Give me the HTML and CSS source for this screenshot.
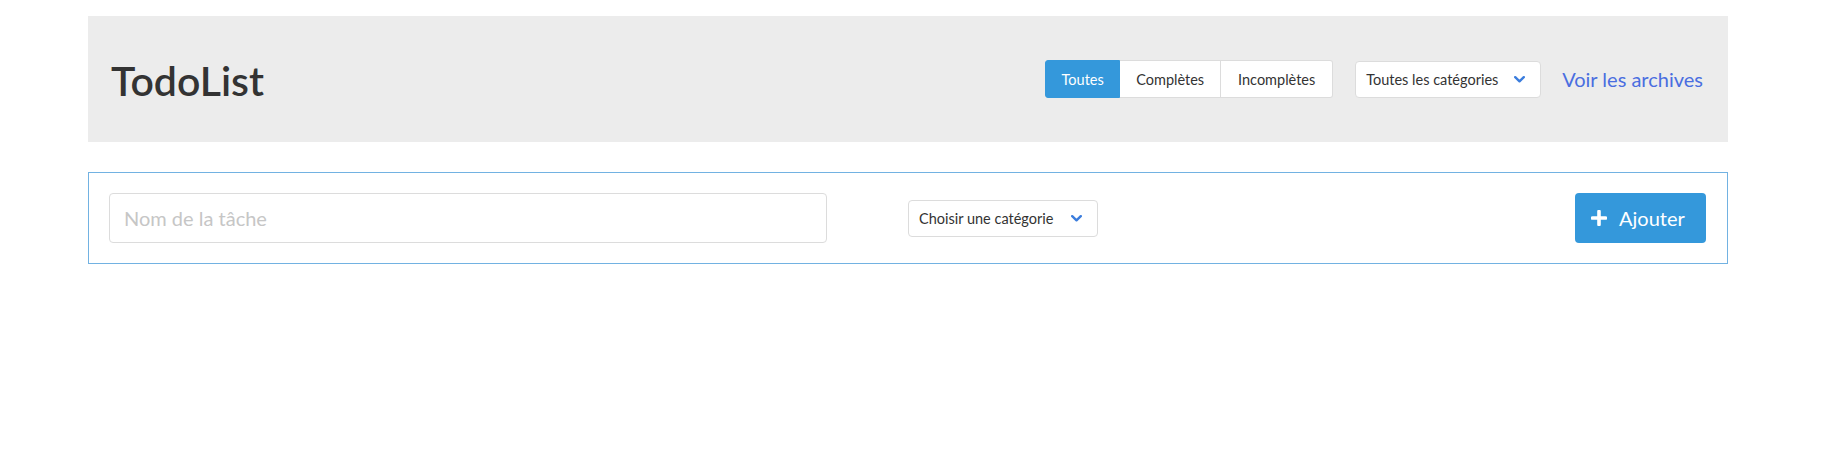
FILE: index.html
```html
<!DOCTYPE html>
<html lang="fr">
<head>
<meta charset="utf-8">
<title>TodoList</title>
<link rel="stylesheet" href="styles.css">
</head>
<body>
<div class="container">
  <header class="header">
    <h1 class="title">TodoList</h1>
    <div class="controls">
      <div class="btn-group">
        <button class="seg seg-active seg-1">Toutes</button>
        <button class="seg seg-2">Complètes</button>
        <button class="seg seg-3">Incomplètes</button>
      </div>
      <div class="select select-filter">
        <span>Toutes les catégories</span>
        <svg class="chev" width="11" height="7" viewBox="0 0 11 7"><path d="M1.2 1.2 L5.5 5.3 L9.8 1.2" fill="none" stroke="#3b7ddd" stroke-width="2.4" stroke-linecap="round" stroke-linejoin="round"/></svg>
      </div>
      <a class="archives" href="#">Voir les archives</a>
    </div>
  </header>

  <form class="add-form">
    <input class="task-input" type="text" placeholder="Nom de la tâche">
    <div class="select select-cat">
      <span>Choisir une catégorie</span>
      <svg class="chev" width="11" height="7" viewBox="0 0 11 7"><path d="M1.2 1.2 L5.5 5.3 L9.8 1.2" fill="none" stroke="#3b7ddd" stroke-width="2.4" stroke-linecap="round" stroke-linejoin="round"/></svg>
    </div>
    <button class="add-btn" type="button">
      <svg class="plus" width="16" height="16" viewBox="0 0 16 16"><path d="M8 1.5 V14.5 M1.5 8 H14.5" stroke="#fff" stroke-width="3.6" stroke-linecap="round"/></svg>
      <span>Ajouter</span>
    </button>
  </form>
</div>
</body>
</html>
```

FILE: styles.css
```css
* { box-sizing: border-box; }

body {
  margin: 0;
  background: #fff;
  font-family: Lato, "Open Sans", sans-serif;
  color: #333;
}

.container {
  width: 1640px;
  margin: 16px 0 0 88px;
}

.header {
  height: 126px;
  background: #ececec;
  display: flex;
  align-items: center;
  padding: 0 25px 0 23px;
}

.title {
  margin: 0;
  padding-top: 2px;
  font-size: 41px;
  line-height: 1;
  font-weight: 600;
  color: #333;
}

.controls {
  margin-left: auto;
  display: flex;
  align-items: center;
}

.btn-group {
  display: flex;
  height: 38px;
  margin-right: 1px;
}

.seg {
  font-family: Lato, sans-serif;
  font-size: 14.5px;
  color: #333;
  background: #fff;
  border: 1px solid #dcdcdc;
  border-left: none;
  padding: 0;
  height: 38px;
  cursor: pointer;
}

.seg-1 { width: 75px; border: 1px solid #3498db; border-radius: 3px 0 0 3px; }
.seg-2 { width: 101px; }
.seg-3 { width: 112px; border-radius: 0 3px 3px 0; }

.seg-active {
  background: #3498db;
  color: #fff;
}

.select {
  display: flex;
  align-items: center;
  justify-content: space-between;
  height: 37px;
  background: #fff;
  border: 1px solid #dcdcdc;
  border-radius: 4px;
  font-size: 14.5px;
  color: #333;
}

.select-filter {
  width: 186px;
  margin-left: 21px;
  padding: 0 15px 0 10px;
}

.archives {
  margin-left: 21px;
  font-size: 20px;
  color: #4a6ee0;
  text-decoration: none;
}

.add-form {
  margin-top: 30px;
  border: 1px solid #72b2e2;
  padding: 20px 21px 20px 20px;
  display: flex;
  align-items: center;
}

.task-input {
  width: 718px;
  height: 50px;
  border: 1px solid #dcdcdc;
  border-radius: 4px;
  padding: 0 14px;
  font-family: Lato, sans-serif;
  font-size: 20px;
  color: #333;
  outline: none;
}

.task-input::placeholder {
  color: #c6c6c6;
}

.select-cat {
  width: 190px;
  margin-left: 81px;
  padding: 0 15px 0 10px;
}

.add-btn {
  margin-left: auto;
  width: 131px;
  height: 50px;
  background: #3498db;
  border: none;
  border-radius: 4px;
  color: #fff;
  font-family: Lato, sans-serif;
  font-size: 20px;
  display: flex;
  align-items: center;
  padding: 0 0 0 16px;
  gap: 12px;
  cursor: pointer;
}

.plus { flex: none; }
```
